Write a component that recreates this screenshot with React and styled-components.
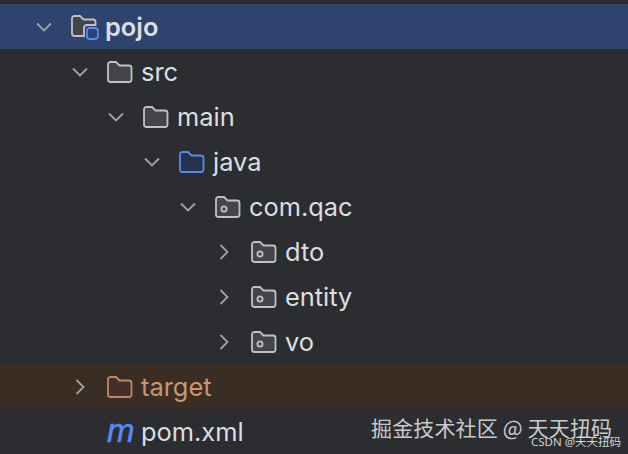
import React from "react";
import styled, { createGlobalStyle } from "styled-components";

const GlobalStyle = createGlobalStyle`
  html, body {
    margin: 0;
    padding: 0;
    background: #2b2d30;
  }
`;

const Tree = styled.div`
  position: relative;
  width: 628px;
  height: 454px;
  overflow: hidden;
  padding-top: 4px;
  box-sizing: border-box;
  background: #2b2d30;
  font-family: Inter, "Noto Sans", sans-serif;
`;

const Row = styled.div`
  display: flex;
  align-items: center;
  height: 45px;
  padding-left: ${p => 35 + p.$level * 36}px;
  background: ${p => (p.$tone === "selected" ? "#2e436e" : p.$tone === "excluded" ? "#392d24" : "transparent")};
`;

const Arrow = styled.div`
  display: flex;
  justify-content: center;
  align-items: center;
  width: 18px;
  height: 18px;
  margin-right: 18px;
`;

const Label = styled.span`
  margin-left: 8px;
  padding-bottom: 1px;
  font-size: 25.4px;
  line-height: 45px;
  font-weight: ${p => (p.$bold ? 600 : 400)};
  color: ${p => (p.$tone === "excluded" ? "#c9966f" : "#dcdee2")};
`;

const MavenMark = styled.span`
  display: block;
  width: 26px;
  padding-bottom: 2px;
  font-family: "Liberation Sans", sans-serif;
  font-size: 33px;
  line-height: 34px;
  font-style: italic;
  font-weight: 400;
  -webkit-text-stroke: 0.5px #548af7;
  color: #548af7;
`;

const ModuleSvg = styled.svg`
  margin-right: -2px;
`;

const Watermark = styled.div`
  position: absolute;
  left: 371px;
  top: 413px;
  font-family: "Noto Sans CJK SC", sans-serif;
  font-size: 21px;
  line-height: 28px;
  letter-spacing: 0.15px;
  white-space: nowrap;
  color: #c9cacb;
`;

const Credit = styled.div`
  position: absolute;
  left: 531px;
  top: 434px;
  font-family: "Noto Sans", "Noto Sans CJK SC", sans-serif;
  font-size: 11.5px;
  line-height: 16px;
  white-space: nowrap;
  color: #d4d5d6;
`;

const Chevron = ({ open }) => (
  <svg width="18" height="18" viewBox="0 0 18 18" fill="none" stroke="#a0a3a8" strokeWidth="1.8">
    {open ? <path d="M2 5.5 9 12.5 16 5.5" /> : <path d="M5.5 2 12.5 9 5.5 16" />}
  </svg>
);

const FOLDER = "M1 4.5A2.5 2.5 0 0 1 3.5 2H9l3.5 3.5H22A2.5 2.5 0 0 1 24.5 8V19.5A2.5 2.5 0 0 1 22 22H3.5A2.5 2.5 0 0 1 1 19.5Z";

const FolderIcon = ({ fill = "#43454a", stroke = "#bfc1c6" }) => (
  <svg width="26" height="24" viewBox="0 0 26 24" fill={fill} stroke={stroke} strokeWidth="1.8">
    <path d={FOLDER} />
  </svg>
);

const PackageIcon = () => (
  <svg width="26" height="24" viewBox="0 0 26 24" fill="#43454a" stroke="#bfc1c6" strokeWidth="1.8">
    <path d={FOLDER} />
    <circle cx="9" cy="14" r="2.6" fill="none" />
  </svg>
);

const ModuleIcon = () => (
  <ModuleSvg width="28" height="28" viewBox="0 0 28 28" fill="none">
    <path d="M13 23H3.5A2.5 2.5 0 0 1 1 20.5V5.5A2.5 2.5 0 0 1 3.5 3H9l3.5 3.5H22A2.5 2.5 0 0 1 24.5 9V12H16A3 3 0 0 0 13 15Z" fill="#43454a" stroke="#bfc1c6" strokeWidth="1.8" />
    <rect x="15.9" y="15" width="11" height="11" rx="3" fill="#2e436e" stroke="#548af7" strokeWidth="1.8" />
  </ModuleSvg>
);

const rows = [
  { level: 0, open: true, icon: <ModuleIcon />, name: "pojo", bold: true, tone: "selected" },
  { level: 1, open: true, icon: <FolderIcon />, name: "src" },
  { level: 2, open: true, icon: <FolderIcon />, name: "main" },
  { level: 3, open: true, icon: <FolderIcon fill="#25324d" stroke="#548af7" />, name: "java" },
  { level: 4, open: true, icon: <PackageIcon />, name: "com.qac" },
  { level: 5, open: false, icon: <PackageIcon />, name: "dto" },
  { level: 5, open: false, icon: <PackageIcon />, name: "entity" },
  { level: 5, open: false, icon: <PackageIcon />, name: "vo" },
  { level: 1, open: false, icon: <FolderIcon fill="#43302a" stroke="#c08763" />, name: "target", tone: "excluded" },
  { level: 1, icon: <MavenMark>m</MavenMark>, name: "pom.xml" },
];

export default function App() {
  return (
    <Tree>
      <GlobalStyle />
      {rows.map(row => (
        <Row key={row.name} $level={row.level} $tone={row.tone}>
          <Arrow>{row.open !== undefined && <Chevron open={row.open} />}</Arrow>
          {row.icon}
          <Label $bold={row.bold} $tone={row.tone}>{row.name}</Label>
        </Row>
      ))}
      <Watermark>掘金技术社区 @ 天天扭码</Watermark>
      <Credit>CSDN @天天扭码</Credit>
    </Tree>
  );
}
